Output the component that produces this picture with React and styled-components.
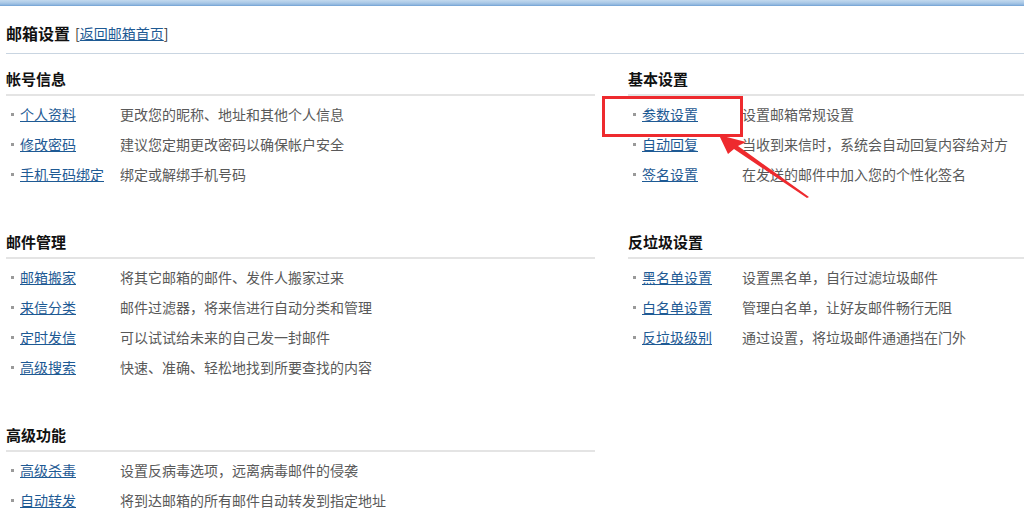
import React from 'react';
import styled, { createGlobalStyle } from 'styled-components';

const Global = createGlobalStyle`
  html, body { margin: 0; padding: 0; background: #fff; }
  body {
    font-family: "Noto Sans CJK SC", "Noto Sans", sans-serif;
    width: 1024px;
    height: 528px;
    overflow: hidden;
  }
  #root { height: 528px; }
`;

const Page = styled.div`
  position: relative;
  width: 1024px;
  height: 528px;
  overflow: hidden;
`;

const TopBar = styled.div`
  height: 6px;
  background: linear-gradient(#c3d9ee 0%, #a9c8e6 50%, #8fb6de 80%, #6e9fd2 100%);
`;

const Header = styled.div`
  display: flex;
  align-items: center;
  height: 48px;
  box-sizing: border-box;
  padding-top: 6px;
  border-bottom: 1px solid #c9d5e1;
  margin-left: 6px;
`;

const Title = styled.h1`
  margin: 0;
  font-size: 16px;
  font-weight: bold;
  color: #111;
  line-height: 24px;
`;

const Back = styled.span`
  margin-left: 5px;
  font-size: 14px;
  color: #333;
  line-height: 24px;
`;

const Link = styled.a`
  color: #1e5a94;
  text-decoration: underline;
  cursor: pointer;
`;

const Columns = styled.div`
  display: grid;
  grid-template-columns: 589px 1fr;
  column-gap: 33px;
  padding-left: 6px;
  margin-top: 10px;
`;

const Column = styled.div`
  display: flex;
  flex-direction: column;
`;

const Section = styled.section`
  margin-bottom: 38px;
`;

const SectionTitle = styled.h2`
  margin: 0;
  height: 30px;
  line-height: 30px;
  font-size: 15px;
  font-weight: bold;
  color: #111;
  border-bottom: 2px solid #e4e4e4;
`;

const List = styled.ul`
  list-style: none;
  margin: 0;
  padding: 3px 0 0 0;
`;

const Row = styled.li`
  display: flex;
  align-items: center;
  height: 30px;
  font-size: 14px;
`;

const Bullet = styled.span`
  width: 3px;
  height: 3px;
  background: #9a9a9a;
  margin: 0 6px 0 5px;
  flex: none;
`;

const ItemLink = styled(Link)`
  width: 100px;
  flex: none;
  line-height: 20px;
`;

const Desc = styled.span`
  color: #595959;
  line-height: 20px;
  white-space: nowrap;
`;

const Overlay = styled.svg`
  position: absolute;
  left: 0;
  top: 0;
  pointer-events: none;
`;

const left = [
  {
    title: '帐号信息',
    items: [
      ['个人资料', '更改您的昵称、地址和其他个人信息'],
      ['修改密码', '建议您定期更改密码以确保帐户安全'],
      ['手机号码绑定', '绑定或解绑手机号码'],
    ],
  },
  {
    title: '邮件管理',
    items: [
      ['邮箱搬家', '将其它邮箱的邮件、发件人搬家过来'],
      ['来信分类', '邮件过滤器，将来信进行自动分类和管理'],
      ['定时发信', '可以试试给未来的自己发一封邮件'],
      ['高级搜索', '快速、准确、轻松地找到所要查找的内容'],
    ],
  },
  {
    title: '高级功能',
    items: [
      ['高级杀毒', '设置反病毒选项，远离病毒邮件的侵袭'],
      ['自动转发', '将到达邮箱的所有邮件自动转发到指定地址'],
    ],
  },
];

const right = [
  {
    title: '基本设置',
    items: [
      ['参数设置', '设置邮箱常规设置'],
      ['自动回复', '当收到来信时，系统会自动回复内容给对方'],
      ['签名设置', '在发送的邮件中加入您的个性化签名'],
    ],
  },
  {
    title: '反垃圾设置',
    items: [
      ['黑名单设置', '设置黑名单，自行过滤垃圾邮件'],
      ['白名单设置', '管理白名单，让好友邮件畅行无阻'],
      ['反垃圾级别', '通过设置，将垃圾邮件通通挡在门外'],
    ],
  },
];

function SectionBlock({ title, items }) {
  return (
    <Section>
      <SectionTitle>{title}</SectionTitle>
      <List>
        {items.map(([name, desc]) => (
          <Row key={name}>
            <Bullet />
            <ItemLink>{name}</ItemLink>
            <Desc>{desc}</Desc>
          </Row>
        ))}
      </List>
    </Section>
  );
}

export default function App() {
  return (
    <Page>
      <Global />
      <TopBar />
      <Header>
        <Title>邮箱设置</Title>
        <Back>
          [<Link>返回邮箱首页</Link>]
        </Back>
      </Header>
      <Columns>
        <Column>
          {left.map((s) => (
            <SectionBlock key={s.title} {...s} />
          ))}
        </Column>
        <Column>
          {right.map((s) => (
            <SectionBlock key={s.title} {...s} />
          ))}
        </Column>
      </Columns>
      <Overlay width="1024" height="528" viewBox="0 0 1024 528">
        <rect x="603.5" y="97.5" width="138" height="38" fill="none" stroke="#ee2a2e" strokeWidth="3" />
        <polygon
          points="719,135 746,142 738,146 809,197 807,198 734,149 728,154"
          fill="#ee2a2e"
        />
      </Overlay>
    </Page>
  );
}
